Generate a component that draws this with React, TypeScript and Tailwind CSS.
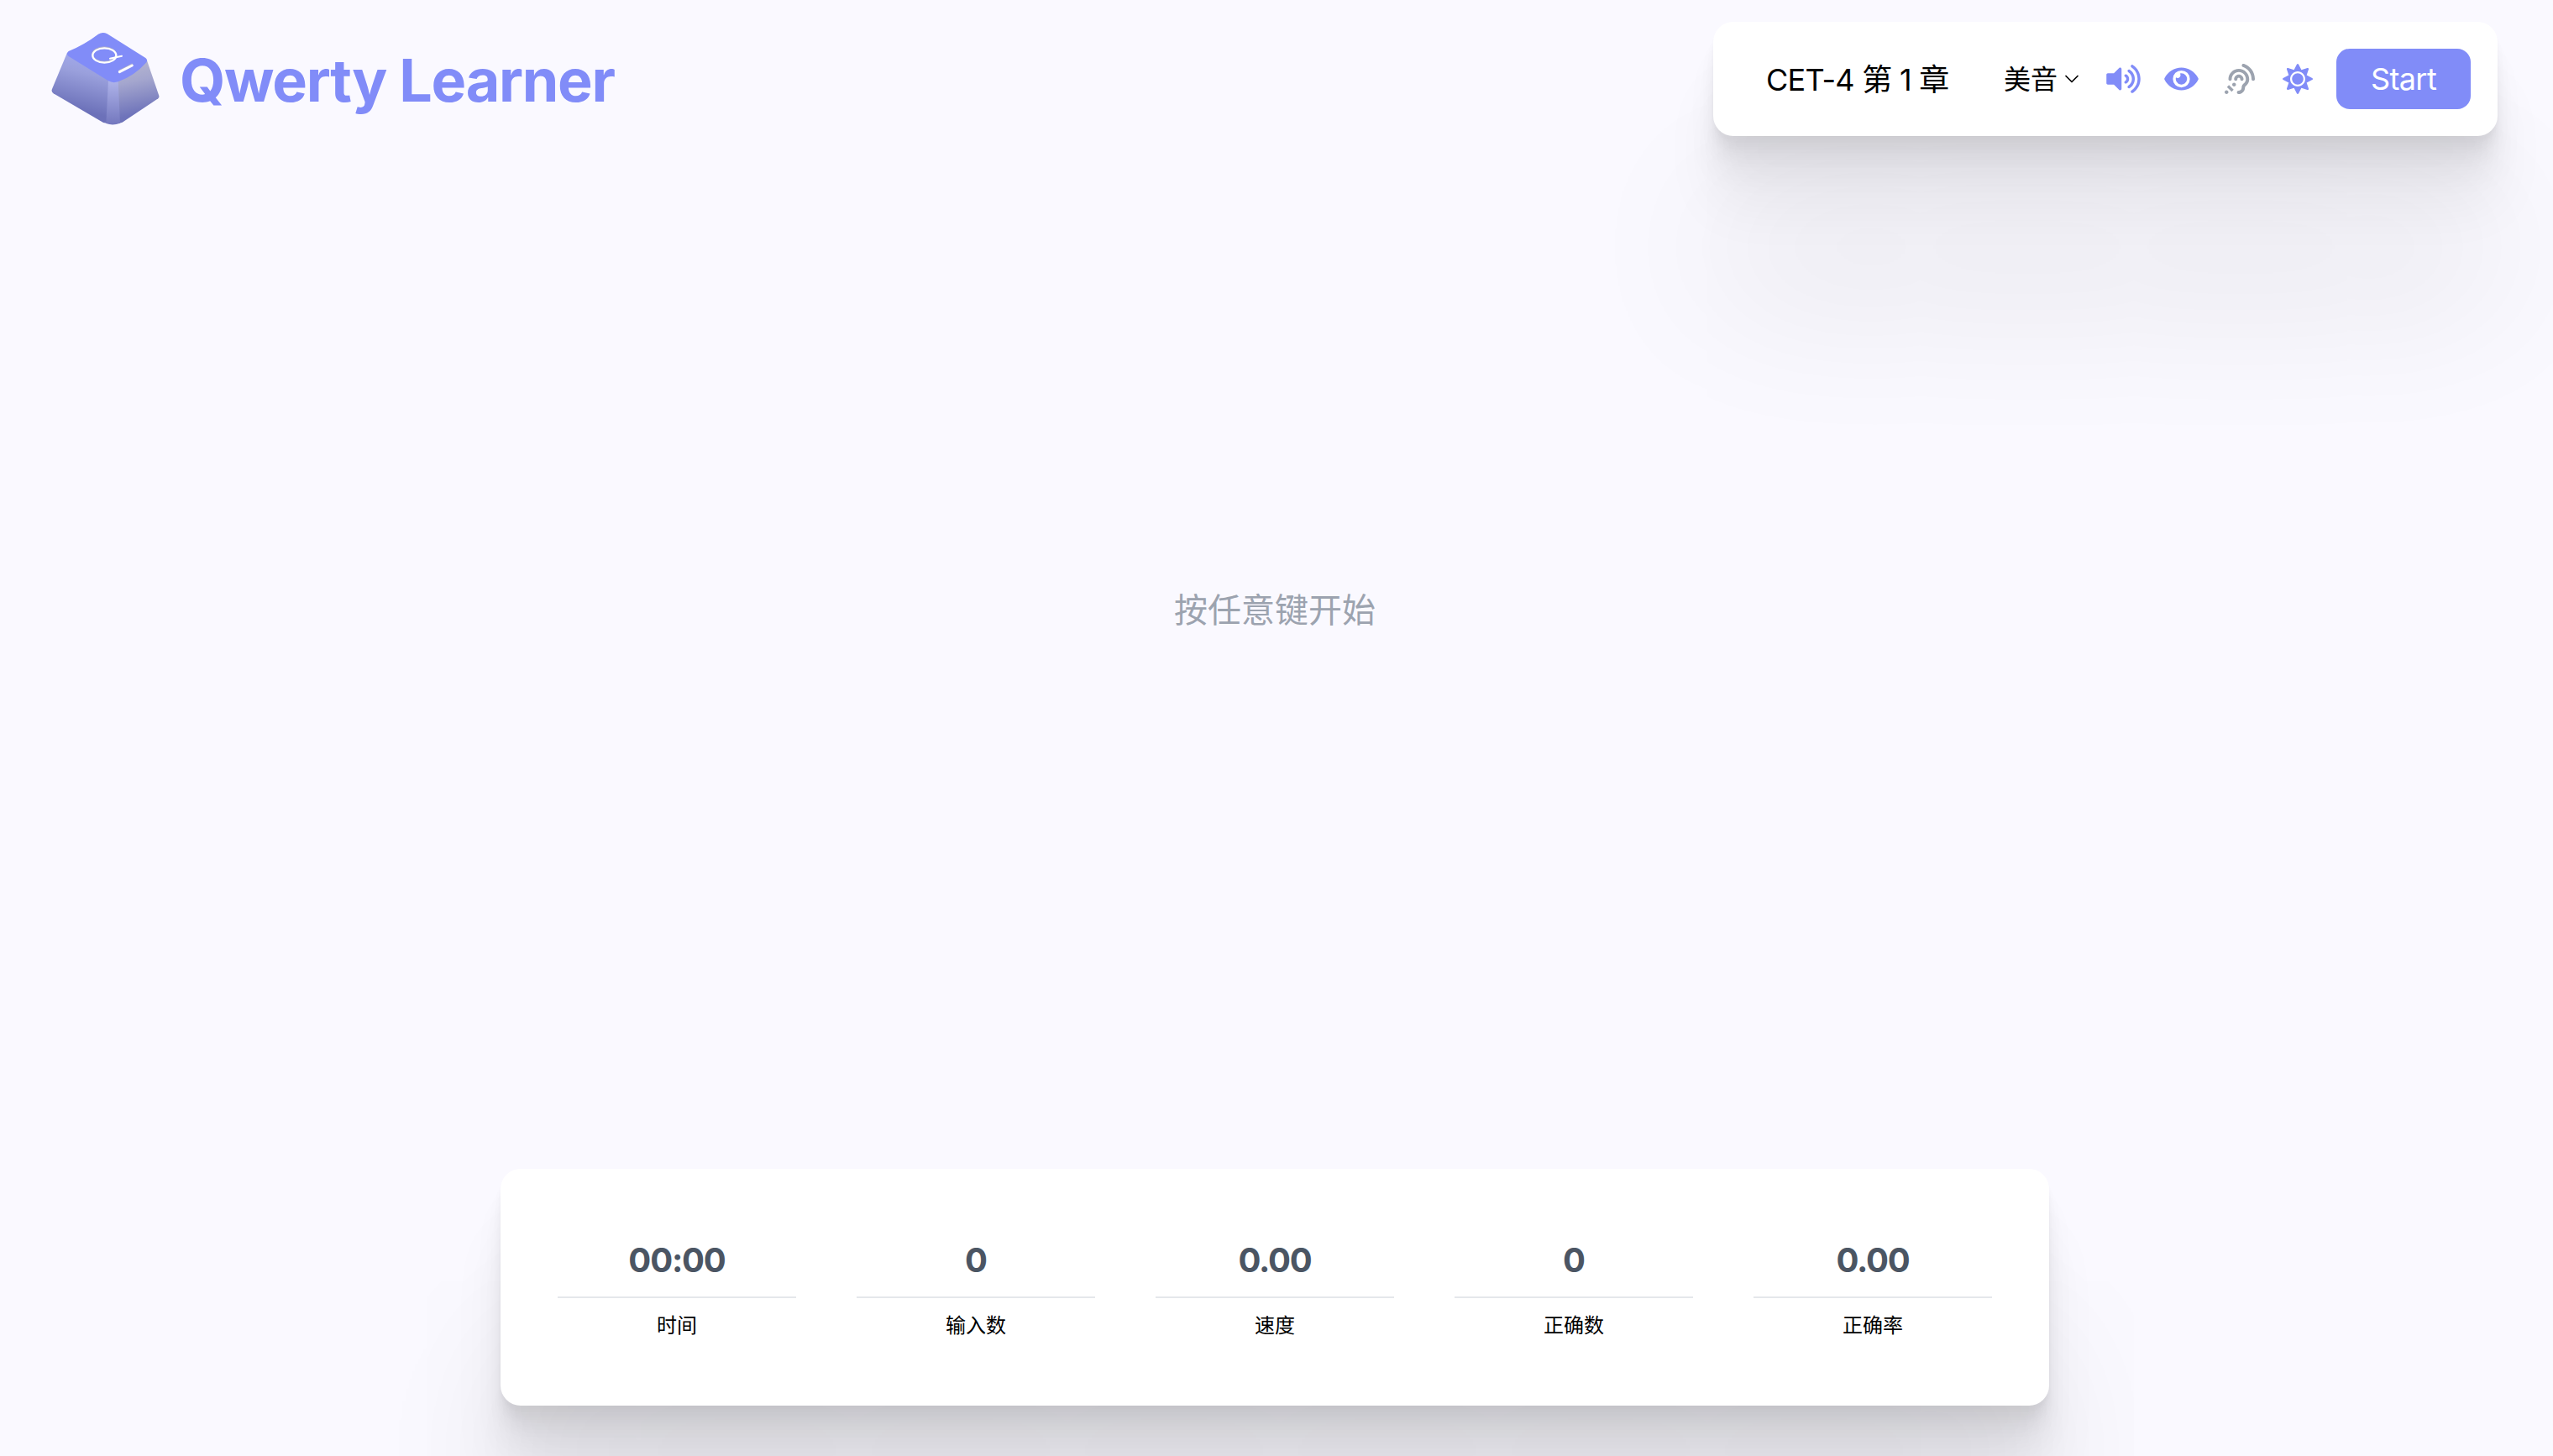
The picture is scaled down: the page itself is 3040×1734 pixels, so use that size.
import type { ReactNode } from 'react'
import { FaAssistiveListeningSystems, FaEye, FaSun, FaVolumeUp } from 'react-icons/fa'

const CARD_SHADOW =
  'shadow-[0_5.6px_4.4px_rgba(0,0,0,0.02),0_13.4px_10.6px_rgba(0,0,0,0.028),0_25px_20px_rgba(0,0,0,0.035),0_44.6px_35.8px_rgba(0,0,0,0.042),0_83.6px_66.8px_rgba(0,0,0,0.05),0_200px_184px_rgba(0,0,0,0.074)]'

function Logo() {
  return (
    <svg className="h-[112px] w-[130px] shrink-0" viewBox="64 54 390 336" fill="none">
      <defs>
        <linearGradient id="left" x1="200" y1="130" x2="150" y2="330" gradientUnits="userSpaceOnUse">
          <stop offset="0" stopColor="#a3abee" />
          <stop offset="0.35" stopColor="#9aa0dc" />
          <stop offset="1" stopColor="#6c71b9" />
        </linearGradient>
        <linearGradient id="right" x1="350" y1="180" x2="385" y2="345" gradientUnits="userSpaceOnUse">
          <stop offset="0" stopColor="#b0b1cf" />
          <stop offset="0.3" stopColor="#a4a6ce" />
          <stop offset="1" stopColor="#6e73ba" />
        </linearGradient>
        <linearGradient id="edge" x1="285" y1="230" x2="285" y2="386" gradientUnits="userSpaceOnUse">
          <stop offset="0" stopColor="#aeb3e9" />
          <stop offset="1" stopColor="#7377be" />
        </linearGradient>
      </defs>
      <path d="M121 128L67 258Q63 268 72 274L250 378L262 380L272 225Z" fill="url(#left)" />
      <path d="M406 156L449 282Q451 288 446 292L318 377L306 381L298 230Z" fill="url(#right)" />
      <path d="M268 228L260 381Q284 390 310 380L303 228Z" fill="url(#edge)" />
      <path
        d="M232 62Q248 52 264 61L401 147Q410 154 404 163Q362 211 303 232Q284 238 268 229L126 141Q115 132 126 123Q185 98 232 62Z"
        fill="#818cf8"
      />
      <g stroke="#a9aacb" strokeWidth="6" strokeLinecap="round" transform="translate(-1 -3)">
        <ellipse cx="254" cy="138" rx="42" ry="26" />
        <path d="M308 196L353 173" />
      </g>
      <g stroke="#fff" strokeLinecap="round">
        <ellipse cx="254" cy="138" rx="42" ry="26" strokeWidth="7" />
        <path d="M274 149L316 140" strokeWidth="6" />
        <path d="M308 197L353 174" strokeWidth="9" />
      </g>
    </svg>
  )
}

function IconSlot({ children }: { children: ReactNode }) {
  return <button className="flex w-[45px] items-center justify-center text-[#818cf8]">{children}</button>
}

function Toolbar() {
  return (
    <div className={`flex h-[136px] w-[934px] items-center justify-end gap-6 rounded-[24px] bg-white pr-8 ${CARD_SHADOW}`}>
      <div className="mr-auto ml-[63px] pt-px text-[36px] leading-none tracking-[-0.7px] whitespace-nowrap">CET-4 第 1 章</div>
      <div className="mr-[3px] flex items-center gap-[5px]">
        <span className="pt-px text-[32px] leading-none">美音</span>
        <svg className="h-6 w-6" viewBox="0 0 24 24" fill="none" stroke="currentColor" strokeWidth="1.7" strokeLinecap="round" strokeLinejoin="round">
          <path d="M19 8.5l-7 7-7-7" />
        </svg>
      </div>
      <IconSlot>
        <FaVolumeUp className="h-[36px] w-[41px]" />
      </IconSlot>
      <IconSlot>
        <FaEye className="h-[36px] w-[41px]" />
      </IconSlot>
      <IconSlot>
        <FaAssistiveListeningSystems className="h-[36px] w-[36px] text-[#9ca3af]" />
      </IconSlot>
      <IconSlot>
        <FaSun className="h-[36px] w-[36px]" />
      </IconSlot>
      <button className="h-[72px] w-[160px] rounded-[16px] bg-[#818cf8] text-[36px] leading-none tracking-[-0.6px] text-white">
        Start
      </button>
    </div>
  )
}

const STATS = [
  { value: '00:00', label: '时间' },
  { value: '0', label: '输入数' },
  { value: '0.00', label: '速度' },
  { value: '0', label: '正确数' },
  { value: '0.00', label: '正确率' },
]

function Stats() {
  return (
    <div className={`mx-auto grid h-[282px] w-[1844px] grid-cols-5 rounded-[24px] bg-white px-8 pt-[80px] ${CARD_SHADOW}`}>
      {STATS.map((s) => (
        <div key={s.label} className="flex flex-col items-center">
          <div className="flex h-[74px] w-4/5 justify-center border-b-2 border-[#e5e7eb] pt-[8px] text-[40px] leading-[42px] font-bold tracking-[-1.2px] text-[#4b5563]">
            {s.value}
          </div>
          <div className="mt-[16px] text-[24px] leading-[34px]">{s.label}</div>
        </div>
      ))}
    </div>
  )
}

export default function App() {
  return (
    <div className="h-[1734px] w-full overflow-hidden bg-[#faf9ff] pr-1 font-['Inter','Noto_Sans_CJK_SC',sans-serif] text-black">
      <div className="flex h-full flex-col">
        <header className="flex h-[136px] items-start justify-between mt-[26px] pr-[62px] pl-[61px]">
          <div className="flex items-start pt-3">
            <Logo />
            <h1 className="mt-[2px] ml-[23px] text-[70px] leading-[112px] font-bold tracking-[-1.3px] whitespace-nowrap text-[#818cf8]">
              Qwerty Learner
            </h1>
          </div>
          <Toolbar />
        </header>
        <main className="flex flex-1 flex-col items-center pt-[537px]">
          <p className="text-[40px] leading-[56px] text-[#9ca3af]">按任意键开始</p>
        </main>
        <footer className="pb-[60px]">
          <Stats />
        </footer>
      </div>
    </div>
  )
}
